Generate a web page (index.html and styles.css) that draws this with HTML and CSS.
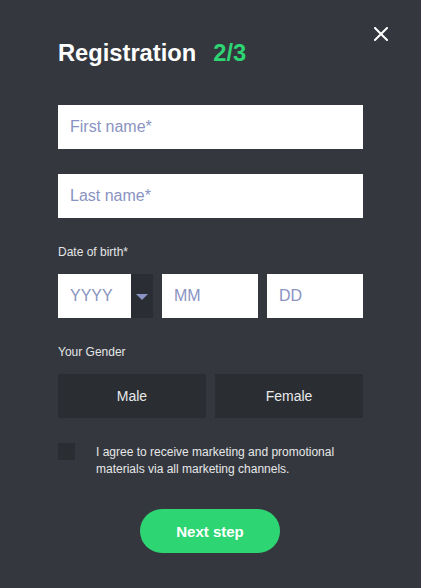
FILE: index.html
```
<!DOCTYPE html>
<html>
<head>
<meta charset="utf-8">
<link rel="stylesheet" href="styles.css">
</head>
<body>
<div class="modal">
  <button class="close" aria-label="Close">
    <svg width="14" height="14" viewBox="0 0 14 14"><path d="M1 1L13 13M13 1L1 13" stroke="#ffffff" stroke-width="2" stroke-linecap="square"/></svg>
  </button>
  <h1 class="title">Registration<span class="step">2/3</span></h1>
  <form class="form">
    <input class="field" type="text" placeholder="First name*">
    <input class="field field-last" type="text" placeholder="Last name*">
    <div class="label">Date of birth*</div>
    <div class="date-row">
      <div class="year">
        <input class="field year-input" type="text" placeholder="YYYY">
        <div class="dropdown">
          <svg width="12" height="6" viewBox="0 0 12 6"><path d="M0 0H12L6 6Z" fill="#8a93c2"/></svg>
        </div>
      </div>
      <input class="field" type="text" placeholder="MM">
      <input class="field" type="text" placeholder="DD">
    </div>
    <div class="label label-gender">Your Gender</div>
    <div class="gender-row">
      <div class="gender-btn">Male</div>
      <div class="gender-btn">Female</div>
    </div>
    <div class="agree">
      <div class="checkbox"></div>
      <div class="agree-text">I agree to receive marketing and promotional materials via all marketing channels.</div>
    </div>
    <div class="actions">
      <div class="next">Next step</div>
    </div>
  </form>
</div>
</body>
</html>
```

FILE: styles.css
```
* {
  box-sizing: border-box;
}
html, body {
  margin: 0;
  padding: 0;
  background: #34383e;
}
body {
  font-family: "Liberation Sans", Arial, sans-serif;
  color: #ffffff;
  width: 421px;
  height: 588px;
  overflow: hidden;
}
.modal {
  position: relative;
  padding: 39px 58px 0 58px;
}
.close {
  position: absolute;
  top: 27px;
  left: 374px;
  width: 14px;
  height: 14px;
  padding: 0;
  border: 0;
  background: none;
  display: block;
}
.close svg {
  display: block;
}
.title {
  margin: 0;
  font-size: 23.7px;
  line-height: 28px;
  font-weight: bold;
  color: #ffffff;
}
.step {
  color: #2ed573;
  margin-left: 17px;
}
.form {
  margin: 38px 0 0 0;
  display: flex;
  flex-direction: column;
  width: 305px;
}
.field {
  display: block;
  width: 100%;
  height: 44px;
  border: 0;
  margin: 0;
  padding: 0 12px;
  background: #ffffff;
  font-family: "Liberation Sans", Arial, sans-serif;
  font-size: 16px;
  color: #333;
  outline: none;
  border-radius: 0;
}
.field::placeholder {
  color: #8a93c2;
  opacity: 1;
}
.field-last {
  margin-top: 25px;
}
.label {
  margin-top: 27px;
  font-size: 12px;
  line-height: 14px;
  color: #e4e5e7;
}
.label-gender {
  margin-top: 27px;
}
.date-row {
  margin-top: 15px;
  display: grid;
  grid-template-columns: 95px 96px 96px;
  column-gap: 9px;
}
.year {
  display: flex;
  height: 44px;
}
.year-input {
  width: 73px;
  flex: none;
}
.dropdown {
  width: 22px;
  height: 44px;
  background: #2a2d33;
  display: flex;
  align-items: center;
  justify-content: center;
}
.dropdown svg {
  display: block;
  margin-top: 1px;
}
.gender-row {
  margin-top: 15px;
  display: grid;
  grid-template-columns: 148px 148px;
  column-gap: 9px;
}
.gender-btn {
  height: 44px;
  background: #2a2d32;
  display: flex;
  align-items: center;
  justify-content: center;
  font-size: 14px;
  color: #e8e9ea;
}
.agree {
  margin-top: 25px;
  display: flex;
  align-items: flex-start;
}
.checkbox {
  width: 17px;
  height: 17px;
  background: #2a2d32;
  flex: none;
}
.agree-text {
  margin-left: 21px;
  padding-top: 1px;
  font-size: 12px;
  line-height: 17px;
  color: #e6e7e8;
}
.actions {
  margin-top: 31px;
  display: flex;
  justify-content: center;
  padding-right: 1px;
}
.next {
  width: 140px;
  height: 44px;
  border-radius: 22px;
  background: #2ed573;
  color: #ffffff;
  font-weight: bold;
  font-size: 15px;
  display: flex;
  align-items: center;
  justify-content: center;
}
```
